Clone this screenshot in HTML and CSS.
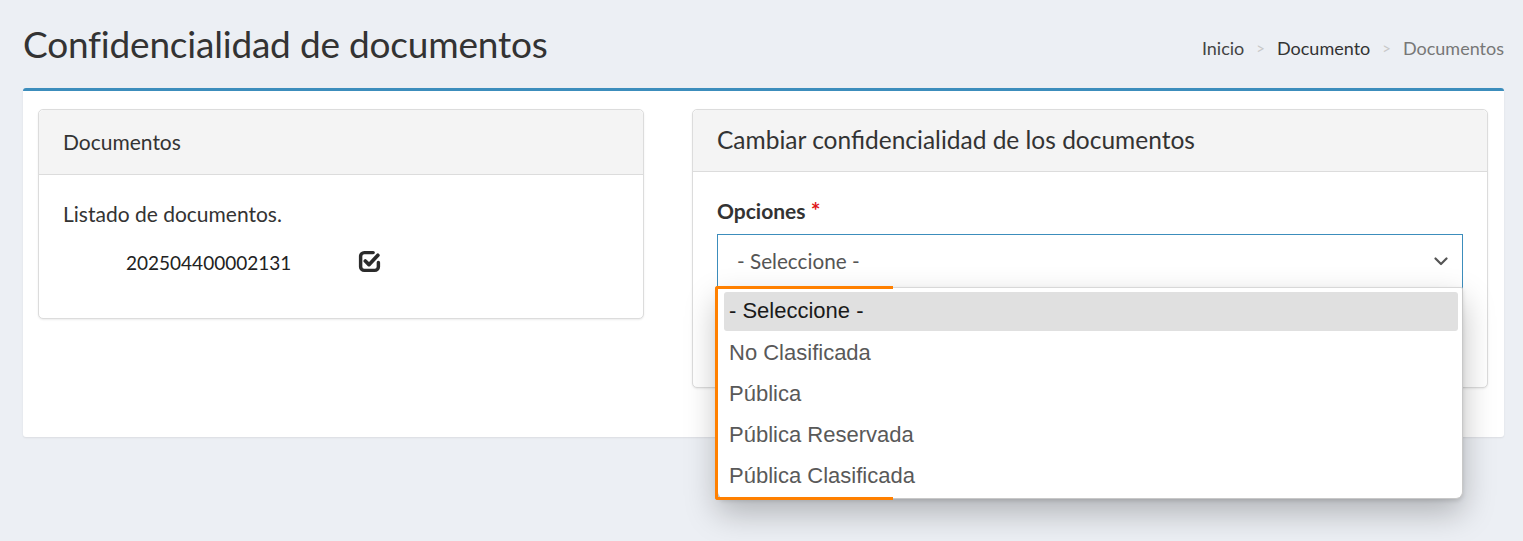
FILE: index.html
```html
<!DOCTYPE html>
<html lang="es">
<head>
<meta charset="utf-8">
<title>Confidencialidad de documentos</title>
<link rel="stylesheet" href="styles.css">
</head>
<body>
<header class="content-header">
  <h1 class="page-title">Confidencialidad de documentos</h1>
  <ol class="breadcrumb">
    <li class="crumb">Inicio</li>
    <li class="sep">&gt;</li>
    <li class="crumb crumb-strong">Documento</li>
    <li class="sep">&gt;</li>
    <li class="crumb crumb-active">Documentos</li>
  </ol>
</header>
<main class="box">
  <section class="card card-left">
    <div class="card-header card-header-left">Documentos</div>
    <div class="card-body card-body-left">
      <p class="list-title">Listado de documentos.</p>
      <div class="doc-row">
        <span class="doc-num">202504400002131</span>
        <svg class="check-icon" width="23" height="23" viewBox="0 0 22 22" aria-hidden="true">
          <path d="M14.5 2.5 H6 A3.5 3.5 0 0 0 2.5 6 V16 A3.5 3.5 0 0 0 6 19.5 H16 A3.5 3.5 0 0 0 19.5 16 V12" fill="none" stroke="#2b2b2b" stroke-width="3.3" stroke-linecap="round"/>
          <path d="M7 10.5 L10.5 14 L19 5" fill="none" stroke="#2b2b2b" stroke-width="3.5" stroke-linecap="round" stroke-linejoin="round"/>
        </svg>
      </div>
    </div>
  </section>
  <section class="card card-right">
    <div class="card-header card-header-right">Cambiar confidencialidad de los documentos</div>
    <div class="card-body card-body-right">
      <label class="field-label">Opciones <span class="req">*</span></label>
      <div class="select-wrap">
        <div class="select">
          <span class="select-value">- Seleccione -</span>
          <svg class="chev" width="14" height="9" viewBox="0 0 14 9" aria-hidden="true">
            <path d="M1.5 1.5 L7 7 L12.5 1.5" fill="none" stroke="#555" stroke-width="2.2" stroke-linecap="round" stroke-linejoin="round"/>
          </svg>
        </div>
        <ul class="dropdown">
          <li class="opt opt-active">- Seleccione -</li>
          <li class="opt">No Clasificada</li>
          <li class="opt">Pública</li>
          <li class="opt">Pública Reservada</li>
          <li class="opt">Pública Clasificada</li>
        </ul>
        <div class="annotation"></div>
      </div>
    </div>
  </section>
</main>
</body>
</html>
```
FILE: styles.css
```css
* { box-sizing: border-box; }
html, body { margin: 0; padding: 0; }
body {
  background: #eceff4;
  font-family: Lato, "Open Sans", sans-serif;
  color: #333;
  width: 1523px;
  height: 541px;
  overflow: hidden;
}
.content-header {
  display: flex;
  justify-content: space-between;
  align-items: center;
  height: 88px;
  padding: 0 19px 2px 23px;
}
.page-title {
  margin: 0;
  font-weight: 400;
  font-size: 37px;
  color: #333;
  letter-spacing: -0.2px;
}
.breadcrumb {
  list-style: none;
  margin: 10px 0 0;
  padding: 0;
  display: flex;
  gap: 12px;
  font-size: 18px;
  align-items: center;
}
.crumb { color: #444; }
.crumb-strong { color: #333; }
.crumb-active { color: #777; }
.sep { color: #c8c8c8; font-size: 15px; }
.box {
  margin: 0 19px 0 23px;
  background: #fff;
  border-top: 3px solid #3c8dbc;
  border-radius: 3px;
  box-shadow: 0 1px 2px rgba(0,0,0,0.08);
  padding: 18px 16px 49px 15px;
  display: grid;
  grid-template-columns: 606px 796px;
  column-gap: 48px;
  align-items: start;
}
.card {
  border: 1px solid #dcdcdc;
  border-radius: 5px;
  background: #fff;
  box-shadow: 0 1px 2px rgba(0,0,0,0.08);
}
.card-header {
  background: #f4f4f4;
  border-bottom: 1px solid #dcdcdc;
  border-radius: 5px 5px 0 0;
  display: flex;
  align-items: center;
  color: #333;
}
.card-header-left {
  height: 65px;
  padding-left: 24px;
  padding-bottom: 2px;
  font-size: 21px;
}
.card-header-right {
  height: 62px;
  padding-left: 24px;
  padding-bottom: 2px;
  font-size: 24.5px;
}
.card-body-left {
  padding: 26px 24px 30px;
  height: 143px;
}
.list-title {
  margin: 0;
  font-size: 21px;
  line-height: 26px;
}
.doc-row {
  display: flex;
  align-items: center;
  margin-top: 24px;
  padding-left: 63px;
  height: 22px;
}
.doc-num {
  font-size: 19px;
  color: #222;
  width: 232px;
}
.check-icon { display: block; margin-top: -2px; }
.card-body-right {
  padding: 24px 24px 0;
  height: 215px;
}
.field-label {
  display: block;
  font-weight: 700;
  font-size: 21px;
  color: #333;
  line-height: 28px;
}
.req { color: #e0161b; font-size: 23px; }
.select-wrap {
  position: relative;
  margin-top: 9px;
}
.select {
  height: 55px;
  border: 1px solid #3c8dbc;
  display: flex;
  align-items: center;
  justify-content: space-between;
  padding: 0 14px 0 19px;
  background: #fff;
}
.select-value {
  font-size: 20.7px;
  color: #555;
  margin-top: -2px;
}
.chev { display: block; }
.dropdown {
  position: absolute;
  top: 53px;
  left: 0;
  width: 746px;
  height: 212px;
  margin: 0;
  padding: 4px 4px 0 6px;
  list-style: none;
  background: #fff;
  border: 1px solid #c8c8c8;
  border-top-color: #d8d8d8;
  border-radius: 2px 2px 7px 7px;
  box-shadow: 0 14px 32px rgba(0,0,0,0.25), 0 2px 4px rgba(0,0,0,0.12);
  font-family: "Liberation Sans", Arial, sans-serif;
  font-size: 22px;
  z-index: 2;
}
.opt {
  height: 41px;
  display: flex;
  align-items: center;
  padding-left: 5px;
  padding-bottom: 1px;
  color: #595959;
}
.opt-active {
  background: #e0e0e0;
  color: #1a1a1a;
  border-radius: 3px;
  height: 39px;
  margin-bottom: 2px;
}
.annotation {
  position: absolute;
  top: 52px;
  left: -2px;
  width: 178px;
  height: 214px;
  border: 3px solid #ff8000;
  border-right: none;
  border-radius: 3px 0 0 3px;
  z-index: 3;
  pointer-events: none;
}
```
